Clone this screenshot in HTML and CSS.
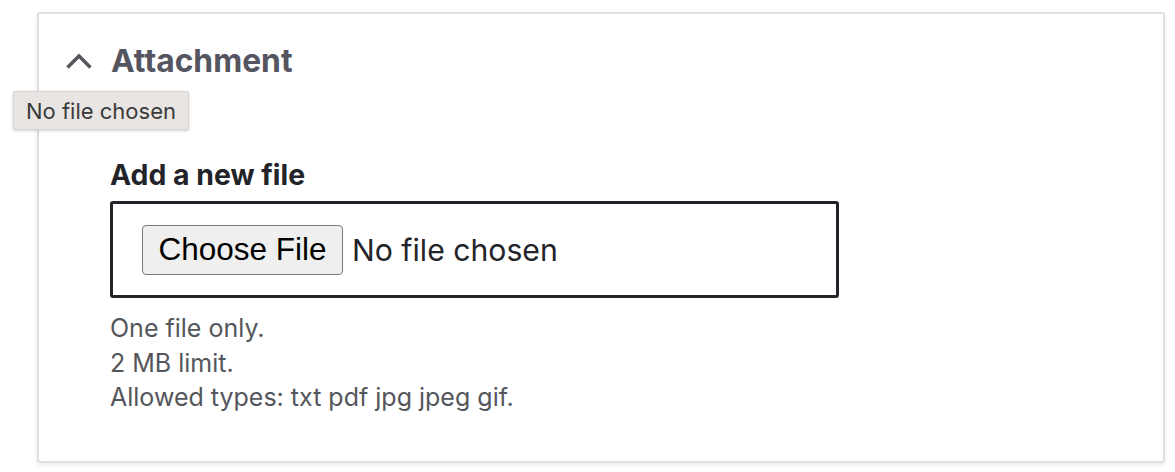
FILE: index.html
```html
<!DOCTYPE html>
<html lang="en">
<head>
<meta charset="utf-8">
<title>Attachment</title>
<link rel="stylesheet" href="styles.css">
</head>
<body>
<div class="page">
  <section class="card">
    <div class="summary">
      <svg class="chevron" width="28" height="18" viewBox="0 0 28 18" aria-hidden="true">
        <path d="M2.5 15.5 L14 4 L25.5 15.5" fill="none" stroke="#55565b" stroke-width="3.4" stroke-linecap="butt" stroke-linejoin="miter"/>
      </svg>
      <h2 class="title">Attachment</h2>
    </div>
    <div class="content">
      <label class="label">Add a new file</label>
      <div class="file-box">
        <span class="file-button">Choose File</span>
        <span class="file-status">No file chosen</span>
      </div>
      <div class="desc">
        <div>One file only.</div>
        <div>2 MB limit.</div>
        <div>Allowed types: txt pdf jpg jpeg gif.</div>
      </div>
    </div>
  </section>
  <div class="tooltip">No file chosen</div>
</div>
</body>
</html>
```

FILE: styles.css
```css
html, body {
  margin: 0;
  padding: 0;
  background: #ffffff;
}
body {
  font-family: Inter, "Liberation Sans", sans-serif;
  width: 1175px;
  height: 472px;
  overflow: hidden;
}
.page {
  position: relative;
  padding: 12px 0 0 37px;
}
.card {
  box-sizing: border-box;
  width: 1128px;
  height: 451px;
  border: 2px solid #dfdfe4;
  border-radius: 3px;
  box-shadow: 0 2px 4px rgba(0, 0, 0, 0.08);
  padding: 28px 0 0 26px;
}
.summary {
  display: flex;
  align-items: center;
  gap: 18px;
  height: 38px;
}
.chevron {
  display: block;
  margin-top: -1px;
}
.title {
  margin: 0;
  font-size: 31.8px;
  font-weight: 700;
  color: #545560;
  line-height: 38px;
}
.content {
  padding: 80px 0 0 45px;
}
.label {
  display: block;
  font-size: 28.4px;
  font-weight: 700;
  color: #232429;
  line-height: 30px;
  margin-bottom: 11px;
}
.file-box {
  box-sizing: border-box;
  width: 729px;
  height: 97px;
  border: 3px solid #232429;
  border-radius: 3px;
  display: flex;
  align-items: center;
  padding-left: 29px;
  gap: 9px;
}
.file-button {
  box-sizing: border-box;
  width: 201px;
  height: 50px;
  display: flex;
  align-items: center;
  justify-content: center;
  background: #efefef;
  border: 1.5px solid #7a7a7a;
  border-radius: 4px;
  font-family: "Liberation Sans", Arial, sans-serif;
  font-size: 31.5px;
  color: #000;
}
.file-status {
  font-size: 30.2px;
  color: #232429;
}
.desc {
  margin-top: 13px;
  font-size: 25px;
  line-height: 34.5px;
  color: #55565b;
}
.tooltip {
  position: absolute;
  left: 13px;
  top: 91px;
  box-sizing: border-box;
  width: 176px;
  height: 39px;
  display: flex;
  align-items: center;
  justify-content: center;
  background: #e9e5e2;
  border: 1px solid #d8d4d1;
  border-radius: 2px;
  box-shadow: 0 1px 3px rgba(0, 0, 0, 0.18);
  font-size: 22px;
  color: #3a3a3a;
}
```
